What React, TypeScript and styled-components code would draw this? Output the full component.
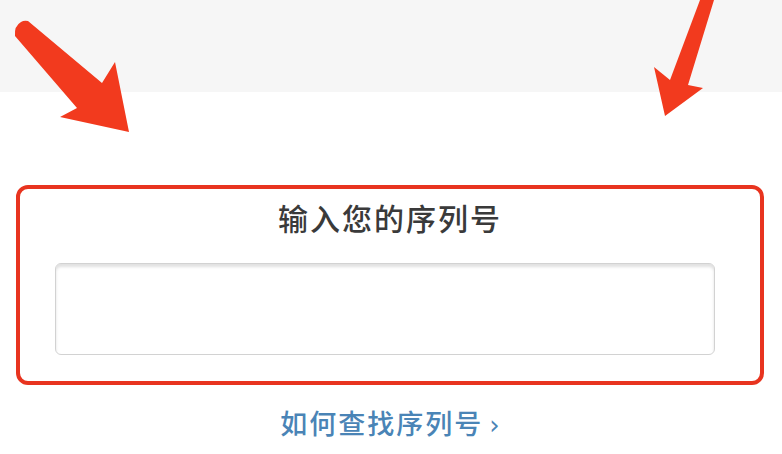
import styled, { createGlobalStyle } from "styled-components";

const GlobalStyle = createGlobalStyle`
    html, body {
        margin: 0;
        padding: 0;
        background: #ffffff;
        font-family: "Noto Sans CJK SC", "Noto Sans", sans-serif;
    }
`;

const Page = styled.div`
    position: relative;
    width: 782px;
    height: 454px;
    overflow: hidden;
    background: #ffffff;
`;

const TopBand = styled.div`
    height: 92px;
    background: #f6f6f6;
`;

const Arrows = styled.svg`
    position: absolute;
    top: 0;
    left: 0;
    pointer-events: none;
`;

const SerialBox = styled.div`
    margin: 93px 18px 0 16px;
    height: 184px;
    border: 4px solid #e8341f;
    border-radius: 12px;
    display: flex;
    flex-direction: column;
    align-items: center;
    padding-top: 8px;
    box-sizing: content-box;
`;

const BoxTitle = styled.div`
    font-size: 30px;
    font-weight: 500;
    letter-spacing: 2px;
    color: #3a3a3a;
    line-height: 40px;
`;

const SerialInput = styled.div`
    align-self: flex-start;
    margin: 26px 0 0 35px;
    width: 658px;
    height: 90px;
    border: 1px solid #d2d2d2;
    border-radius: 6px;
    box-shadow: inset 0 3px 3px rgba(0, 0, 0, 0.12);
    background: #ffffff;
`;

const HelpLink = styled.div`
    margin-top: 20px;
    text-align: center;
    font-size: 27px;
    font-weight: 500;
    letter-spacing: 2px;
    color: #4a84b6;
    line-height: 36px;
`;

const Chevron = styled.span`
    font-family: "DejaVu Sans", sans-serif;
    font-size: 26px;
    margin-left: 6px;
`;

const App: React.FC = () => {
    return (
        <>
            <GlobalStyle />
            <Page>
                <TopBand />
                <SerialBox>
                    <BoxTitle>输入您的序列号</BoxTitle>
                    <SerialInput />
                </SerialBox>
                <HelpLink>
                    如何查找序列号<Chevron>›</Chevron>
                </HelpLink>
                <Arrows width="782" height="454" viewBox="0 0 782 454">
                    <path
                        d="M28 21 L102 83 L115 62 L129 132 L60 117 L77 108 L15 36 Q14 26 21 22 Q24 20 28 21 Z"
                        fill="#f23a1e"
                    />
                    <path
                        d="M700 0 L714 0 L688 85 L703 88 L665 116 L654 67 L670 80 Z"
                        fill="#f23a1e"
                    />
                </Arrows>
            </Page>
        </>
    );
};

export default App;
